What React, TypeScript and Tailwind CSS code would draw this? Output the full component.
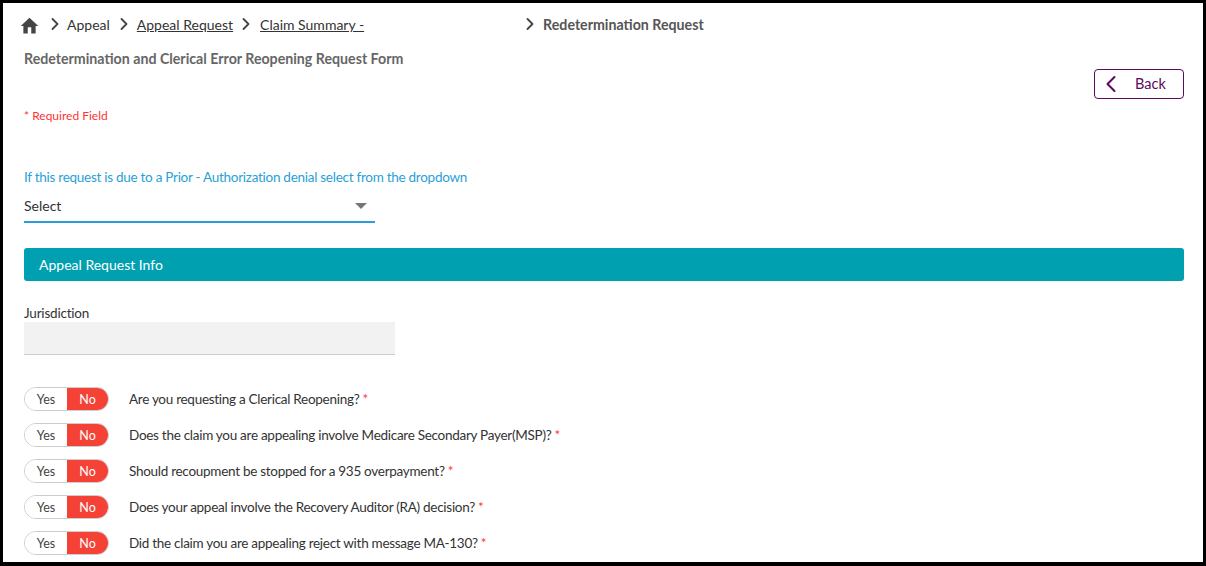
import { ChevronLeft, ChevronRight } from 'lucide-react';

const questions = [
  'Are you requesting a Clerical Reopening?',
  'Does the claim you are appealing involve Medicare Secondary Payer(MSP)?',
  'Should recoupment be stopped for a 935 overpayment?',
  'Does your appeal involve the Recovery Auditor (RA) decision?',
  'Did the claim you are appealing reject with message MA-130?',
];

function Crumb() {
  return <ChevronRight className="w-[20px] h-[20px] -mt-[3px] text-[#444] shrink-0" strokeWidth={2.2} />;
}

function YesNo() {
  return (
    <div className="flex w-[85px] h-6 rounded-full border border-[#ccc] overflow-hidden text-[12.5px] leading-none shrink-0">
      <div className="flex items-center justify-center w-[42px] pt-[2px] bg-white text-[#444]">Yes</div>
      <div className="flex items-center justify-center flex-1 pt-[2px] bg-[#f44336] text-white">No</div>
    </div>
  );
}

export default function App() {
  return (
    <div className="relative w-[1206px] h-[566px] overflow-hidden bg-white border-[3px] border-b-4 border-black font-['Lato',sans-serif] text-[#333]">
      <div className="flex items-center h-[16px] mt-[14px] ml-[16px] text-[14px]">
        <svg viewBox="0 0 24 24" className="w-[21px] h-[21px] shrink-0 fill-[#444]">
          <path d="M10 21v-7h4v7h5v-8.5h3L12 3 2 12.5h3V21z" />
        </svg>
        <div className="ml-[5px]"><Crumb /></div>
        <span className="ml-[2px] -mt-[2px]">Appeal</span>
        <div className="ml-[4px]"><Crumb /></div>
        <span className="ml-[3px] -mt-[1px] underline">Appeal Request</span>
        <div className="ml-[3px]"><Crumb /></div>
        <span className="ml-[4px] -mt-[1px] underline">Claim Summary -</span>
        <div className="ml-[156px]"><Crumb /></div>
        <span className="ml-[3px] font-bold text-[14.2px] text-[#555]">Redetermination Request</span>
      </div>

      <div className="flex items-start justify-between pl-[21px] pr-[19px]">
        <div>
          <h1 className="mt-[16px] text-[14.2px] leading-[20px] font-bold text-[#666]">
            Redetermination and Clerical Error Reopening Request Form
          </h1>
          <p className="mt-[39px] text-[12px] leading-[16px] text-[#ff3333]">* Required Field</p>
        </div>
        <button className="flex items-center w-[90px] h-[30px] mt-[36px] pl-[2px] rounded border border-[#5c0a5c] text-[#5c0a5c] text-[14.5px]">
          <ChevronLeft className="w-[28px] h-[28px] shrink-0" strokeWidth={1.8} />
          <span className="ml-[10px]">Back</span>
        </button>
      </div>

      <div className="pl-[21px] pr-[19px]">
        <label className="block mt-[44px] text-[13.5px] tracking-[-0.27px] leading-[18px] text-[#2a9fd6]">
          If this request is due to a Prior - Authorization denial select from the dropdown
        </label>
        <div className="flex items-center justify-between w-[351px] h-[35px] mt-[2px] pt-[2px] pr-[8px] border-b-2 border-[#2a9fd6] text-[14px] text-[#333]">
          <span>Select</span>
          <span className="w-0 h-0 border-x-[6px] border-x-transparent border-t-[6px] border-t-[#777]" />
        </div>

        <div className="flex items-center h-[33px] mt-[25px] pl-[15px] rounded-[3px] bg-[#00a0b0] text-white text-[14px]">
          Appeal Request Info
        </div>

        <label className="block mt-[23px] text-[13.5px] tracking-[-0.2px] leading-[18px] text-[#333]">Jurisdiction</label>
        <div className="w-[371px] h-[33px] bg-[#f2f2f2] border-b border-[#ccc]" />

        <div className="flex flex-col gap-[12px] mt-[32px]">
          {questions.map((q) => (
            <div key={q} className="flex items-center h-6">
              <YesNo />
              <span className="ml-[20px] text-[13.5px] tracking-[-0.28px] text-[#333]">
                {q}<span className="ml-[3px] text-[#ff3333]">*</span>
              </span>
            </div>
          ))}
        </div>
      </div>
    </div>
  );
}
